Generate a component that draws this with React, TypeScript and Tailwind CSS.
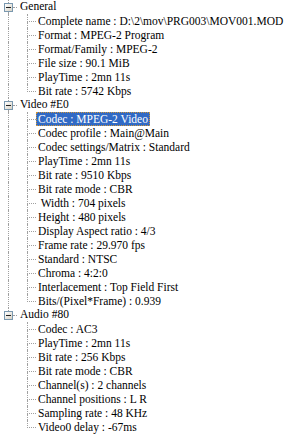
import React from "react";

type Group = { title: string; items: string[] };

const groups: Group[] = [
  {
    title: "General",
    items: [
      "Complete name : D:\\2\\mov\\PRG003\\MOV001.MOD",
      "Format : MPEG-2 Program",
      "Format/Family : MPEG-2",
      "File size : 90.1 MiB",
      "PlayTime : 2mn 11s",
      "Bit rate : 5742 Kbps",
    ],
  },
  {
    title: "Video #E0",
    items: [
      "Codec : MPEG-2 Video",
      "Codec profile : Main@Main",
      "Codec settings/Matrix : Standard",
      "PlayTime : 2mn 11s",
      "Bit rate : 9510 Kbps",
      "Bit rate mode : CBR",
      " Width : 704 pixels",
      "Height : 480 pixels",
      "Display Aspect ratio : 4/3",
      "Frame rate : 29.970 fps",
      "Standard : NTSC",
      "Chroma : 4:2:0",
      "Interlacement : Top Field First",
      "Bits/(Pixel*Frame) : 0.939",
    ],
  },
  {
    title: "Audio #80",
    items: [
      "Codec : AC3",
      "PlayTime : 2mn 11s",
      "Bit rate : 256 Kbps",
      "Bit rate mode : CBR",
      "Channel(s) : 2 channels",
      "Channel positions : L R",
      "Sampling rate : 48 KHz",
      "Video0 delay : -67ms",
    ],
  },
];

const dot = "border-dotted border-[#a0a0a0]";

function MinusBox() {
  return (
    <div className="flex h-[9px] w-[9px] shrink-0 items-center justify-center border border-[#7a98af] bg-[linear-gradient(135deg,#ffffff,#d8d3c6)]">
      <div className="h-px w-[5px] bg-[#1f1f1f]" />
    </div>
  );
}

function GroupRow({ title, last }: { title: string; last: boolean }) {
  return (
    <div className="flex h-[14px] items-center">
      <div className="flex h-[14px] w-[17px] shrink-0 items-center pl-[4px]">
        <div className="flex h-[14px] w-[9px] flex-col items-center">
          <div className={`h-[3px] border-l ${dot}`} />
          <MinusBox />
          {!last && <div className={`h-[2px] border-l ${dot}`} />}
        </div>
        <div className={`w-[4px] border-t ${dot}`} />
      </div>
      <span className="whitespace-pre pl-[3px]">{title}</span>
    </div>
  );
}

function ItemRow({
  text,
  parentLast,
  last,
  selected,
}: {
  text: string;
  parentLast: boolean;
  last: boolean;
  selected?: boolean;
}) {
  return (
    <div className="flex h-[14px] items-center">
      <div className="flex h-[14px] w-[17px] shrink-0 pl-[8px]">
        {!parentLast && <div className={`border-l ${dot}`} />}
      </div>
      <div className="flex h-[14px] w-[19px] shrink-0 flex-col pl-[10px]">
        <div className={`h-[8px] border-b border-l ${dot}`} />
        {!last && <div className={`h-[6px] border-l ${dot}`} />}
      </div>
      <span
        className={`h-[14px] whitespace-pre border border-dotted px-[1px] leading-[12px] ${
          selected ? "border-[#ce953a] bg-[#316ac5] text-white" : "border-transparent"
        }`}
      >
        {text}
      </span>
    </div>
  );
}

export default function App() {
  return (
    <div className="h-[441px] w-[289px] overflow-hidden bg-white font-['Liberation_Serif',serif] text-[11.5px] text-black">
      {groups.map((g, gi) => {
        const gLast = gi === groups.length - 1;
        return (
          <div key={g.title} className="flex flex-col">
            <GroupRow title={g.title} last={gLast} />
            {g.items.map((it, i) => (
              <ItemRow
                key={it}
                text={it}
                parentLast={gLast}
                last={i === g.items.length - 1}
                selected={gi === 1 && i === 0}
              />
            ))}
          </div>
        );
      })}
    </div>
  );
}
